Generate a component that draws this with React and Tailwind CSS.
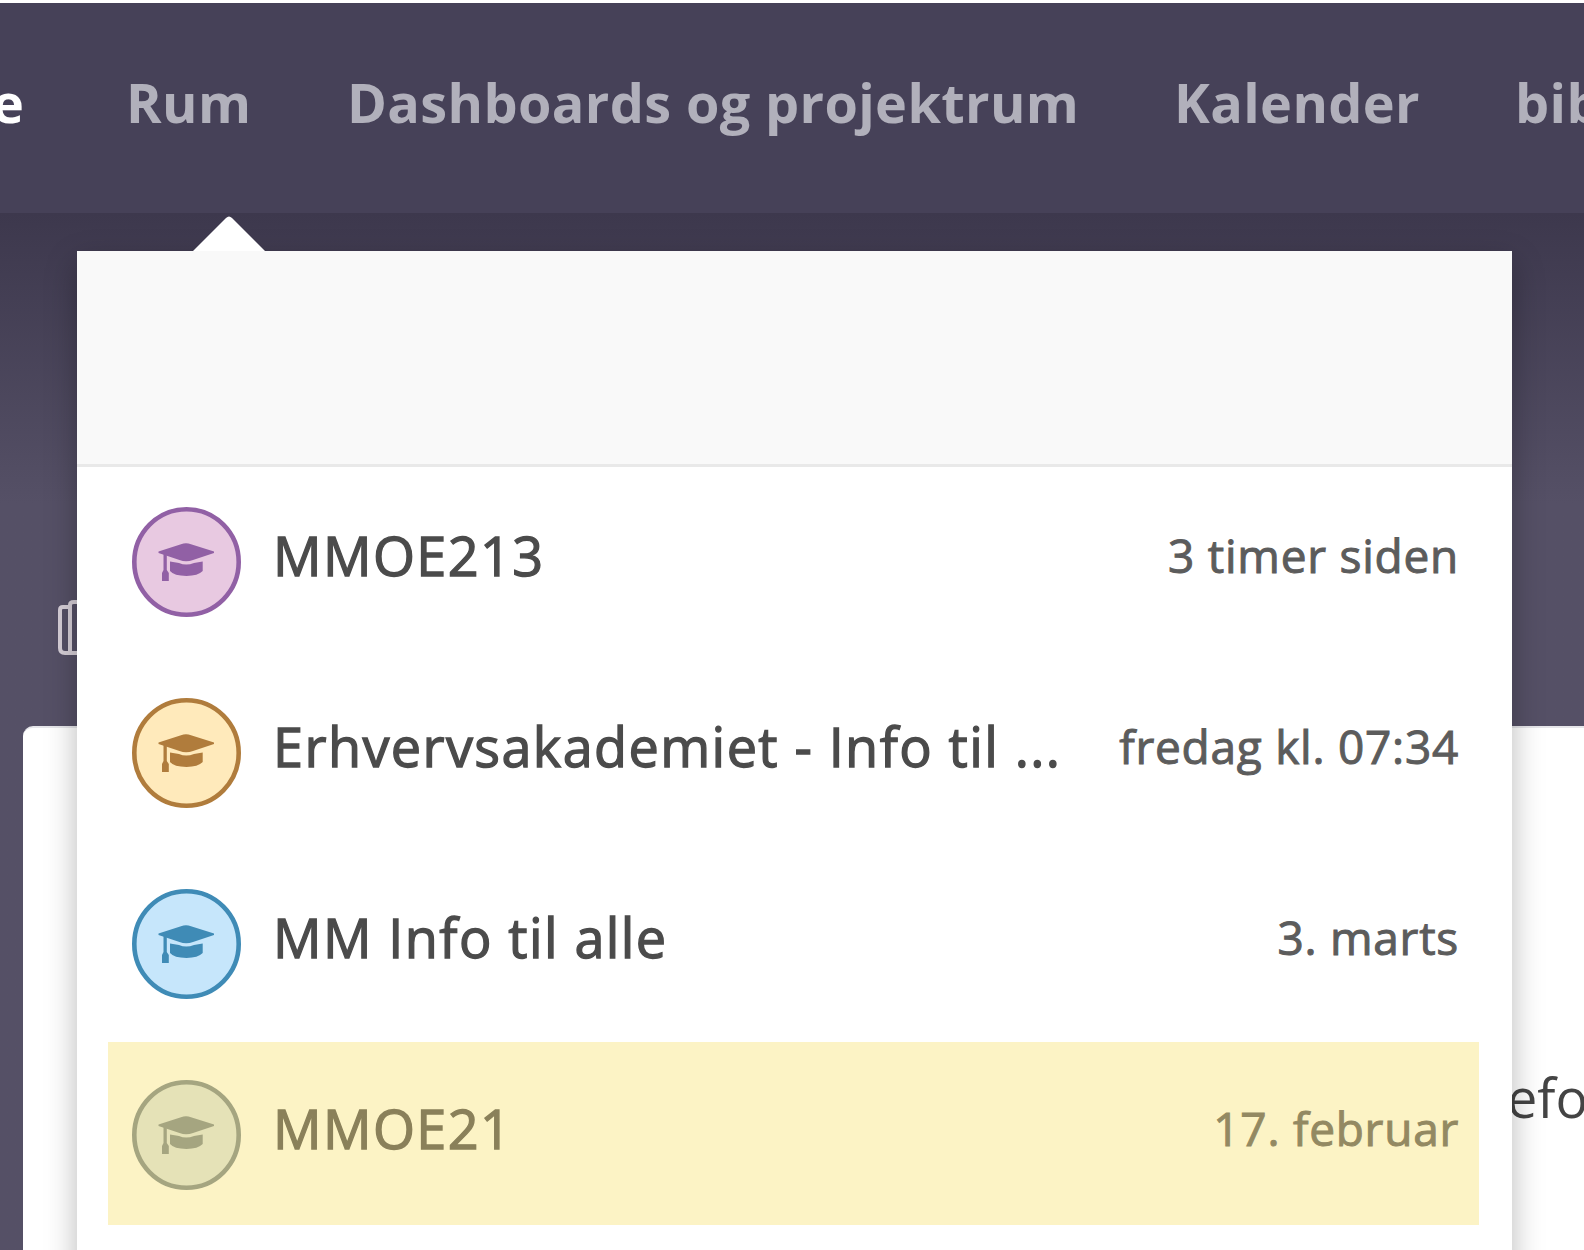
const rooms = [
  { name: 'MMOE213', time: '3 timer siden', ring: '#9160a5', fill: '#e8c9e1' },
  { name: 'Erhvervsakademiet - Info til ...', time: 'fredag kl. 07:34', ring: '#b07c3c', fill: '#ffeabb' },
  { name: 'MM Info til alle', time: '3. marts', ring: '#3f8bb6', fill: '#c6e6fb' },
  { name: 'MMOE21', time: '17. februar', ring: '#a5a580', fill: '#e5e2b7', active: true },
];

function RoomBadge({ ring, fill }) {
  return (
    <svg width="109" height="110" viewBox="0 0 109 110" className="shrink-0">
      <ellipse cx="54.5" cy="55" rx="52.2" ry="52.7" fill={fill} stroke={ring} strokeWidth="4.6" />
      <path d="M26.5 44.5 L49 37.2 Q54 35.2 59 37.2 L82 44.5 V46 L61 53 Q54 55.5 47.5 53 L26.5 46 Z" fill={ring} />
      <path d="M31.5 46 H34.8 V63 L36.8 66 V74 H30 V66 L31.5 63 Z" fill={ring} />
      <path d="M38 54.5 L47 56 Q54 59 62 56 L70.7 54.5 V64 Q66 68.8 54.5 69 Q42 68.8 38 64 Z" fill={ring} />
    </svg>
  );
}

function RoomRow({ room }) {
  return (
    <li className={room.active ? 'flex h-[183px] items-start bg-[#fcf3c5] pt-[38px] pl-[24px] pr-[20px]' : 'flex h-[191px] items-start pt-[38px] pl-[24px] pr-[20px]'}>
      <RoomBadge ring={room.ring} fill={room.fill} />
      <span className={room.active ? 'ml-[32px] mt-[11px] grow whitespace-pre text-[54px] leading-[74px] tracking-[1.4px] text-[#8a805a] [-webkit-text-stroke:1.3px_#8a805a]' : 'ml-[32px] mt-[11px] grow whitespace-pre text-[54px] leading-[74px] tracking-[1.4px] text-[#4b4b4b] [-webkit-text-stroke:1.3px_#4b4b4b]'}>
        {room.name}
      </span>
      <span className={room.active ? 'mt-[16px] whitespace-pre text-[46px] leading-[64px] tracking-[0.75px] text-[#938962] [-webkit-text-stroke:1px_#938962]' : 'mt-[16px] whitespace-pre text-[46px] leading-[64px] tracking-[0.75px] text-[#5c5c5c] [-webkit-text-stroke:1px_#5c5c5c]'}>
        {room.time}
      </span>
    </li>
  );
}

export default function App() {
  return (
    <div className="relative flex h-[1250px] w-[1584px] flex-col overflow-hidden bg-[#555066] pt-[3px] font-['Open_Sans',sans-serif]">
      <div className="absolute inset-x-0 top-0 h-[3px] bg-white" />
      <nav className="flex h-[210px] shrink-0 items-center overflow-hidden bg-[#464158] pb-[13px] text-[54px] leading-[74px] font-bold tracking-[0.38px] whitespace-pre text-[#b1b0bb]">
        <span className="-ml-[8px] w-[134px] shrink-0 text-white">e</span>
        <span className="w-[221px] shrink-0">Rum</span>
        <span className="w-[827px] shrink-0">Dashboards og projektrum</span>
        <span className="w-[341px] shrink-0">Kalender</span>
        <span className="shrink-0">bibliotek</span>
      </nav>
      <main className="flex grow flex-col bg-linear-to-b from-[#3d384d] from-0% to-[#555066] to-[290px]">
        <div className="flex h-[513px] items-start pt-[387px] pl-[58px]">
          <svg width="56" height="56" viewBox="0 0 56 56" fill="none" stroke="#d6cfd7" strokeWidth="4">
            <path d="M12 7 H5 Q2 7 2 10 V48 Q2 53 7 53 H40" />
            <path d="M12 53 V5 Q12 2 16 2 H50 V53" />
          </svg>
        </div>
        <section className="ml-[23px] flex grow justify-end rounded-tl-[10px] border-t-2 border-[#e6e6ea] bg-white pt-[332px]">
          <p className="w-[77px] text-[54px] leading-[74px] whitespace-pre text-[#444444]">efo</p>
        </section>
      </main>
      <div className="absolute top-[251px] left-[77px] h-[1040px] w-[1435px] bg-white shadow-[0_12px_30px_rgba(0,0,0,0.28)]">
        <svg width="74" height="36" viewBox="0 0 74 36" className="absolute -top-[35px] left-[114.5px]">
          <path d="M0 36 L34 2 Q37 -1 40 2 L74 36 Z" fill="#ffffff" />
        </svg>
        <div className="relative h-[216px] border-b-3 border-[#e9e9e9] bg-[#f9f9f9]" />
        <ul className="mr-[33px] ml-[31px] flex flex-col pt-[2px]">
          {rooms.map((room) => (
            <RoomRow key={room.name} room={room} />
          ))}
        </ul>
      </div>
    </div>
  );
}
